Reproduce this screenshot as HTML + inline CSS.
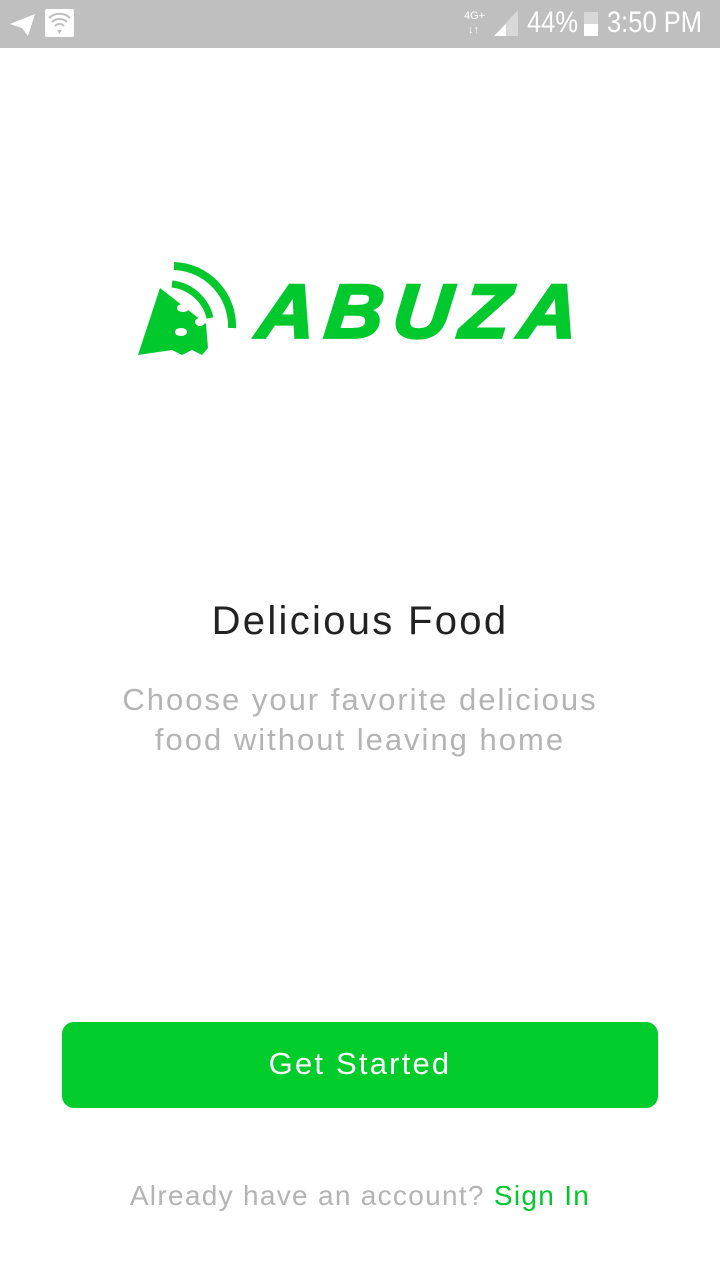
<!DOCTYPE html>
<html><head><meta charset="utf-8"><style>
*{margin:0;padding:0;box-sizing:border-box}
body{width:720px;height:1280px;background:#fff;font-family:"Liberation Sans",sans-serif;position:relative;overflow:hidden}
.sb{position:absolute;left:0;top:0;width:720px;height:48px;background:#bfbfbf;color:#fff}
.abs{position:absolute}
.logo{position:absolute;left:258px;top:262px;font-size:80px;font-weight:900;font-style:italic;color:#00c92d;letter-spacing:10px;transform:skewX(-6deg) scaleY(0.95);-webkit-text-stroke:3px #00c92d;line-height:100px}
h1{position:absolute;top:599px;width:720px;text-align:center;font-size:40px;font-weight:400;color:#222;letter-spacing:2.3px}
.sub{position:absolute;top:680px;width:720px;text-align:center;font-size:31px;color:#b4b4b4;line-height:40px;letter-spacing:2px}
.btn{position:absolute;left:62px;top:1022px;width:596px;height:86px;background:#00cc2c;border-radius:12px;color:#fff;font-size:31px;text-align:center;line-height:84px;letter-spacing:2.2px}
.foot{position:absolute;top:1180px;width:720px;text-align:center;font-size:28px;color:#b4b4b4;letter-spacing:1.3px}
.foot span{color:#00c92d}
</style></head><body>
<div class="sb">
<svg class="abs" style="left:8px;top:10px" width="30" height="28" viewBox="0 0 30 28"><path d="M2 14 L27 4 L20 26 L14 18 Z" fill="#fff"/></svg>
<div class="abs" style="left:45px;top:9px;width:29px;height:28px;background:#fff;border-radius:2px"></div>
<svg class="abs" style="left:47px;top:12px" width="25" height="24" viewBox="0 0 25 24"><path d="M2 6 A15 15 0 0 1 23 6 M5 10 A11 11 0 0 1 20 10 M8 14 A6 6 0 0 1 17 14" stroke="#bfbfbf" stroke-width="2" fill="none"/><path d="M10 18 L15 18 L12.5 22Z" fill="#bfbfbf"/></svg>
<div class="abs" style="left:464px;top:10px;font-size:11px">4G+</div>
<div class="abs" style="left:468px;top:24px;font-size:11px">↓↑</div>
<svg class="abs" style="left:494px;top:10px" width="24" height="26"><path d="M0 26 L24 26 L24 0Z" fill="#d8d8d8"/><path d="M0 26 L12 26 L12 14Z" fill="#fff"/></svg>
<div class="abs" style="left:527px;top:6px;font-size:30px;transform:scaleX(0.85);transform-origin:left">44%</div>
<div class="abs" style="left:584px;top:12px;width:14px;height:24px;background:#d8d8d8"></div>
<div class="abs" style="left:584px;top:24px;width:14px;height:12px;background:#fff"></div>
<div class="abs" style="left:607px;top:6px;font-size:30px;transform:scaleX(0.85);transform-origin:left">3:50 PM</div>
</div>
<svg class="abs" style="left:136px;top:258px" width="102" height="100" viewBox="0 0 102 100">
<path d="M38 8 A60 60 0 0 1 96 70" stroke="#00c92d" stroke-width="8" fill="none"/>
<path d="M36 26 A44 44 0 0 1 74 60" stroke="#00c92d" stroke-width="7" fill="none"/>
<path d="M24 30 L70 66 L72 90 L66 97 L56 92 L46 97 L36 92 L2 97 Z" fill="#00c92d"/>
<ellipse cx="47" cy="50" rx="6" ry="4" fill="#fff"/>
<ellipse cx="64" cy="64" rx="5" ry="4" fill="#fff"/>
<ellipse cx="45" cy="74" rx="6" ry="4" fill="#fff"/>
</svg>
<div class="logo">ABUZA</div>
<h1>Delicious Food</h1>
<div class="sub">Choose your favorite delicious<br>food without leaving home</div>
<div class="btn">Get Started</div>
<div class="foot">Already have an account? <span>Sign In</span></div>
</body></html>
